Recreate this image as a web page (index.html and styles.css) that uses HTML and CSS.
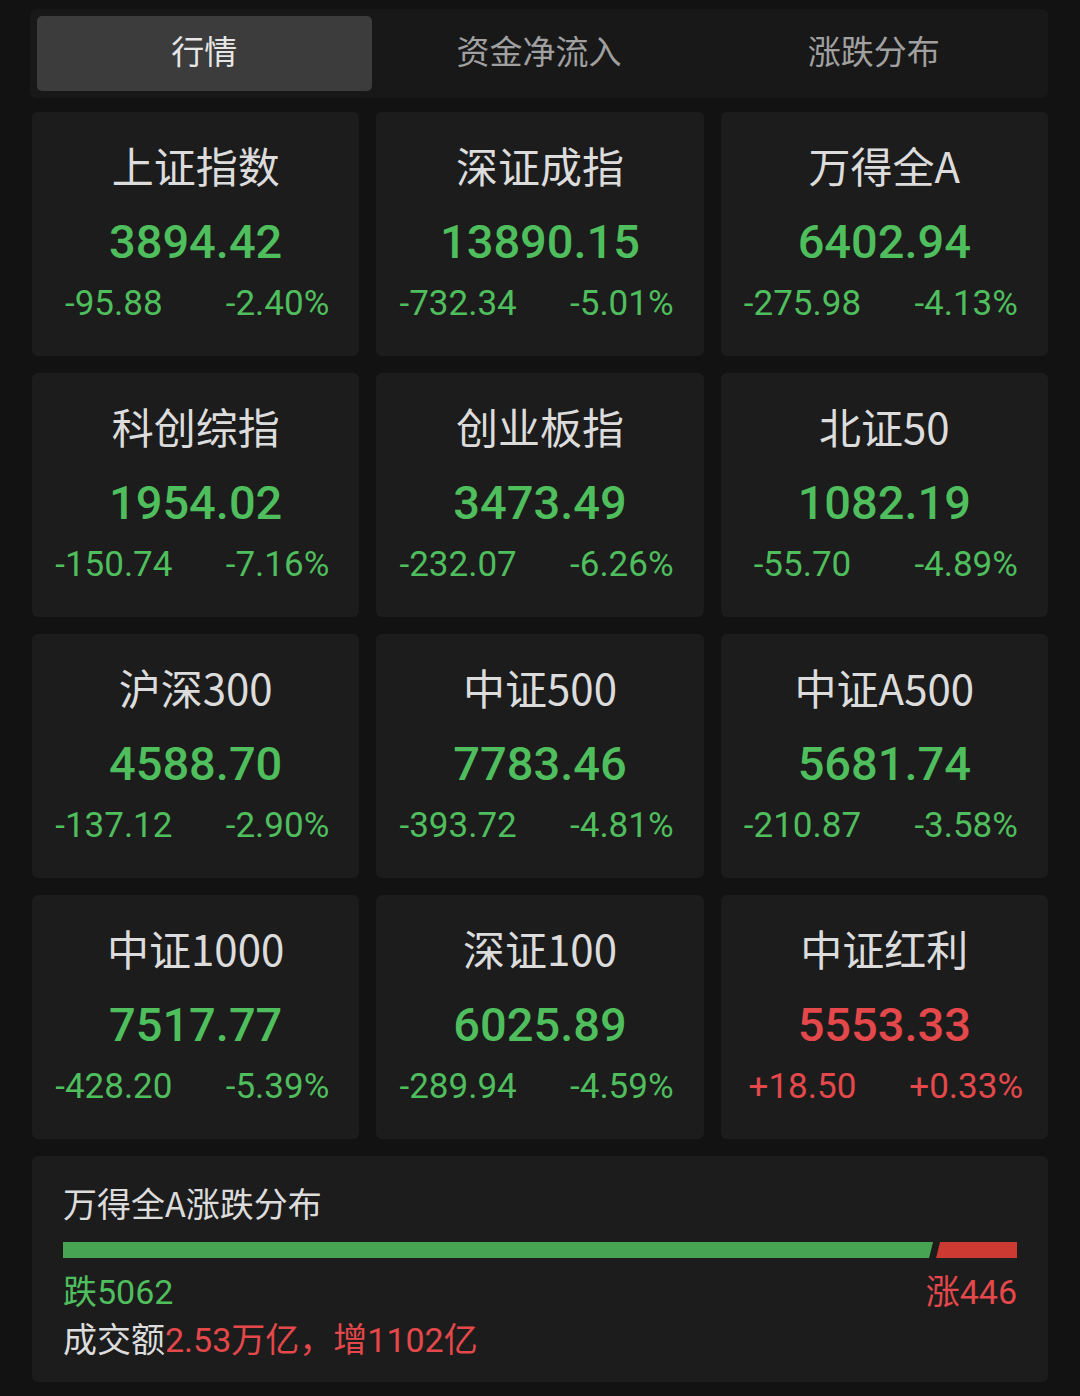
FILE: index.html
```html
<!DOCTYPE html>
<html>
	<head>
		<meta charset="UTF-8">
		<title>行情</title>
		<link rel="stylesheet" href="styles.css">
	</head>
	<body>
		<div class="tabs">
			<div class="tab active">行情</div>
			<div class="tab">资金净流入</div>
			<div class="tab">涨跌分布</div>
		</div>

		<div class="grid">
			<div class="card down">
				<div class="name">上证指数</div>
				<div class="price">3894.42</div>
				<div class="chg"><span>-95.88</span><span>-2.40%</span></div>
			</div>
			<div class="card down">
				<div class="name">深证成指</div>
				<div class="price">13890.15</div>
				<div class="chg"><span>-732.34</span><span>-5.01%</span></div>
			</div>
			<div class="card down">
				<div class="name">万得全A</div>
				<div class="price">6402.94</div>
				<div class="chg"><span>-275.98</span><span>-4.13%</span></div>
			</div>

			<div class="card down">
				<div class="name">科创综指</div>
				<div class="price">1954.02</div>
				<div class="chg"><span>-150.74</span><span>-7.16%</span></div>
			</div>
			<div class="card down">
				<div class="name">创业板指</div>
				<div class="price">3473.49</div>
				<div class="chg"><span>-232.07</span><span>-6.26%</span></div>
			</div>
			<div class="card down">
				<div class="name">北证50</div>
				<div class="price">1082.19</div>
				<div class="chg"><span>-55.70</span><span>-4.89%</span></div>
			</div>

			<div class="card down">
				<div class="name">沪深300</div>
				<div class="price">4588.70</div>
				<div class="chg"><span>-137.12</span><span>-2.90%</span></div>
			</div>
			<div class="card down">
				<div class="name">中证500</div>
				<div class="price">7783.46</div>
				<div class="chg"><span>-393.72</span><span>-4.81%</span></div>
			</div>
			<div class="card down">
				<div class="name">中证A500</div>
				<div class="price">5681.74</div>
				<div class="chg"><span>-210.87</span><span>-3.58%</span></div>
			</div>

			<div class="card down">
				<div class="name">中证1000</div>
				<div class="price">7517.77</div>
				<div class="chg"><span>-428.20</span><span>-5.39%</span></div>
			</div>
			<div class="card down">
				<div class="name">深证100</div>
				<div class="price">6025.89</div>
				<div class="chg"><span>-289.94</span><span>-4.59%</span></div>
			</div>
			<div class="card up">
				<div class="name">中证红利</div>
				<div class="price">5553.33</div>
				<div class="chg"><span>+18.50</span><span>+0.33%</span></div>
			</div>
		</div>

		<div class="dist">
			<div class="dist-title">万得全A涨跌分布</div>
			<div class="bar">
				<div class="bar-fall" style="width: 91.2%"></div>
				<div class="bar-rise"></div>
			</div>
			<div class="dist-count">
				<span class="green">跌5062</span>
				<span class="red">涨446</span>
			</div>
			<div class="turnover">成交额<span class="red">2.53万亿，增1102亿</span></div>
		</div>
	</body>
</html>
```

FILE: styles.css
```css
*{
	margin: 0;
	padding: 0;
	box-sizing: border-box;
}
body{
	width: 1080px;
	min-height: 1396px;
	padding: 9px 32px 0;
	background-color: #121212;
	font-family: Roboto, "Noto Sans CJK SC", sans-serif;
	color: #dedede;
}

.tabs{
	display: flex;
	height: 89px;
	margin: 0 0 14px -2px;
	padding: 7px;
	background-color: #181818;
	border-radius: 6px;
}
.tab{
	flex: 1;
	display: flex;
	align-items: center;
	justify-content: center;
	padding-bottom: 7px;
	font-family: "Noto Sans CJK SC", sans-serif;
	font-size: 33px;
	color: #a0a0a0;
	border-radius: 5px;
}
.tab.active{
	background-color: #3c3c3c;
	color: #e6e6e6;
}

.grid{
	display: grid;
	grid-template-columns: repeat(3, 1fr);
	gap: 17px 17px;
}
.card{
	height: 244px;
	padding-top: 29px;
	background-color: #1c1c1c;
	border-radius: 6px;
	text-align: center;
}
.name{
	height: 48px;
	line-height: 48px;
	font-family: "Noto Sans CJK SC", sans-serif;
	font-size: 42px;
	color: #dcdcdc;
}
.price{
	height: 56px;
	margin-top: 25px;
	line-height: 56px;
	font-size: 47px;
	font-weight: 500;
}
.chg{
	display: flex;
	height: 40px;
	margin-top: 14px;
	line-height: 40px;
	font-size: 35px;
}
.chg span{
	flex: 1;
}
.down .price, .down .chg{
	color: #4fbe5c;
}
.up .price, .up .chg{
	color: #e5484a;
}

.dist{
	height: 226px;
	margin-top: 17px;
	padding: 27px 31px 0;
	background-color: #1c1c1c;
	border-radius: 6px;
}
.dist-title{
	height: 40px;
	line-height: 40px;
	font-family: "Noto Sans CJK SC", sans-serif;
	font-size: 34px;
	color: #dcdcdc;
}
.bar{
	display: flex;
	gap: 3px;
	height: 16px;
	margin-top: 19px;
}
.bar-fall{
	height: 100%;
	background-color: #47a452;
	clip-path: polygon(0 0, 100% 0, calc(100% - 4px) 100%, 0 100%);
}
.bar-rise{
	flex: 1;
	height: 100%;
	background-color: #cc3a32;
	clip-path: polygon(4px 0, 100% 0, 100% 100%, 0 100%);
}
.dist-count{
	display: flex;
	justify-content: space-between;
	height: 40px;
	margin-top: 14px;
	line-height: 40px;
	font-size: 34px;
}
.turnover{
	height: 40px;
	margin-top: 8px;
	line-height: 40px;
	font-size: 34px;
	color: #dcdcdc;
}
.green{
	color: #4fbe5c;
}
.red{
	color: #e5484a;
}
```
